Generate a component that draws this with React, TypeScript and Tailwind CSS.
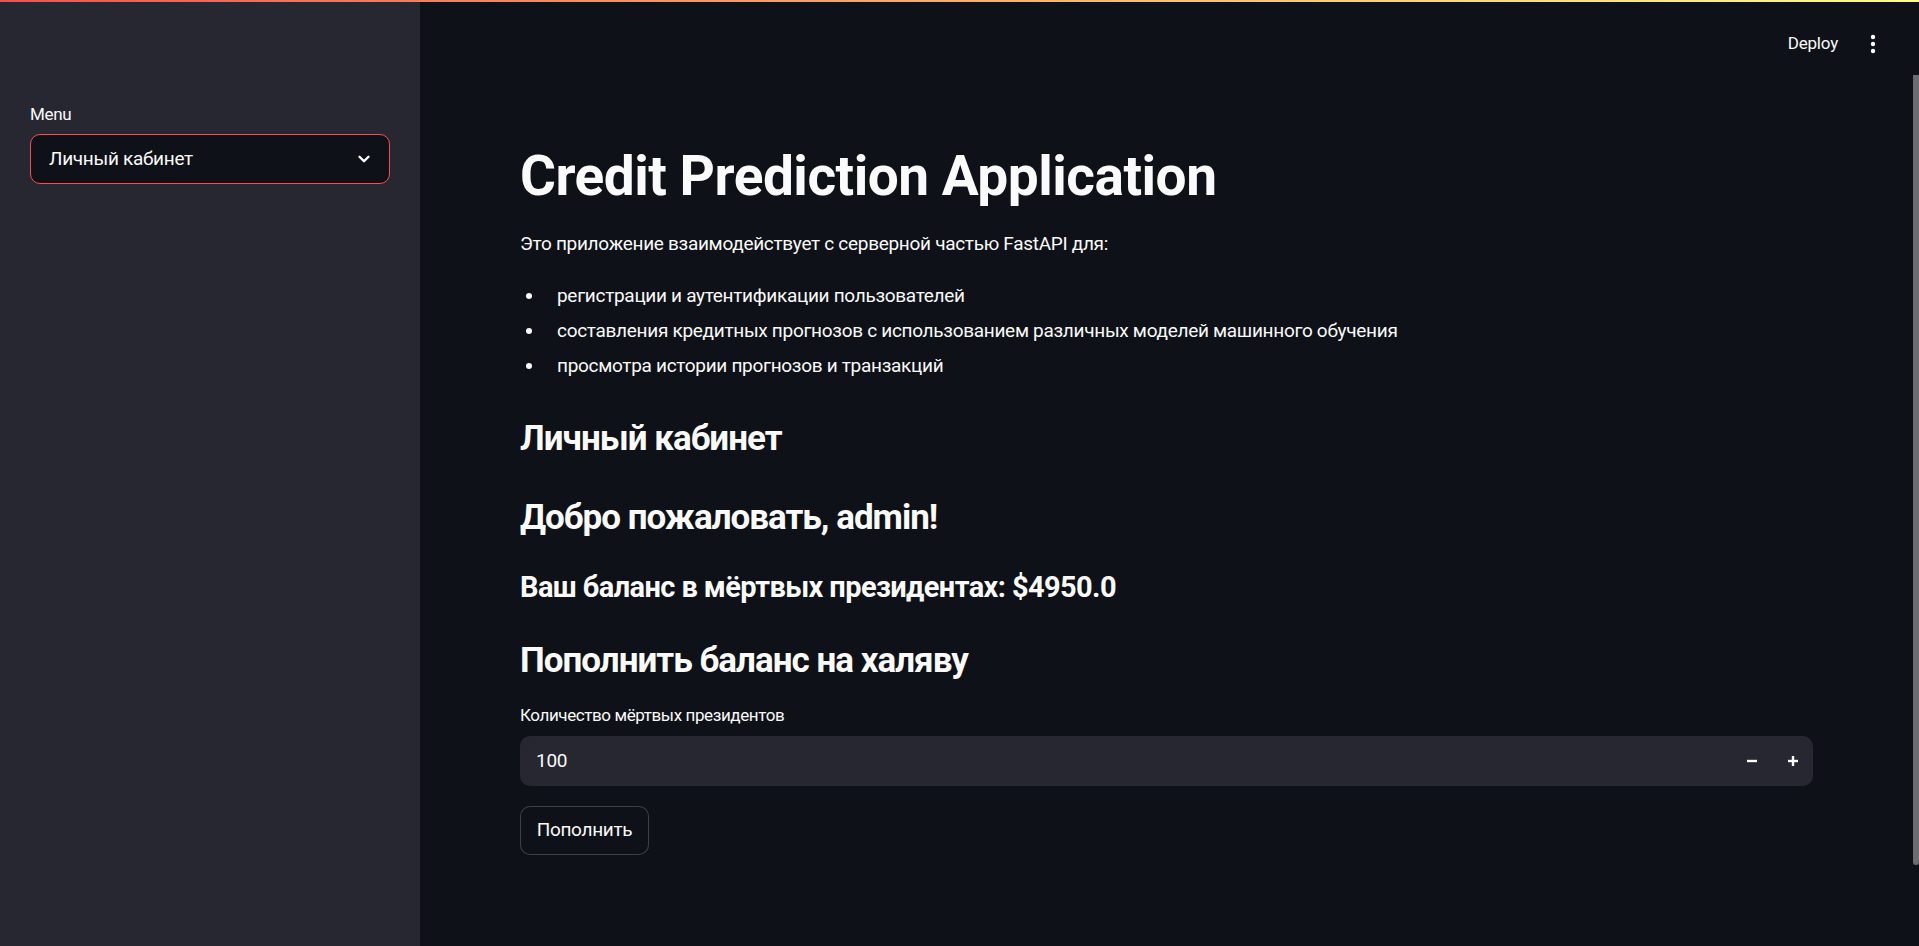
import React from 'react';

const Chevron = () => (
  <svg width="18" height="18" viewBox="0 0 24 24" fill="none" stroke="#fafafa" strokeWidth="3.2" strokeLinecap="round" strokeLinejoin="round">
    <polyline points="6 9 12 15 18 9" />
  </svg>
);

const Kebab = () => (
  <svg width="8" height="20" viewBox="0 0 8 20" fill="#fafafa">
    <circle cx="4" cy="3" r="2.2" />
    <circle cx="4" cy="10" r="2.2" />
    <circle cx="4" cy="17" r="2.2" />
  </svg>
);

const bullets = [
  'регистрации и аутентификации пользователей',
  'составления кредитных прогнозов с использованием различных моделей машинного обучения',
  'просмотра истории прогнозов и транзакций',
];

export default function App() {
  return (
    <div className="h-[946px] w-full flex flex-col overflow-hidden bg-[#0e1117] text-[#fafafa] [font-family:Roboto,'Noto_Sans',sans-serif]">
      {/* top decoration */}
      <div className="h-[2px] w-full bg-gradient-to-r from-[#ff4b4b] to-[#fffd80]" />

      <div className="flex flex-1 min-h-0">
        {/* Sidebar */}
        <aside className="w-[420px] shrink-0 bg-[#262730] pt-[101px] px-[30px]">
          <div className="text-[17px] leading-[22px] mb-[9px] tracking-[-0.3px]">Menu</div>
          <div className="h-[50px] flex items-center justify-between rounded-[10px] border border-[#ff4b4b] bg-[#0e1117] pl-[18px] pr-[16px]">
            <span className="text-[19px] tracking-[-0.3px]">Личный кабинет</span>
            <Chevron />
          </div>
        </aside>

        {/* Main */}
        <main className="relative flex-1 min-w-0 flex flex-col">
          <header className="h-[84px] flex items-center justify-end gap-[31px] pr-[42px]">
            <span className="text-[17px] tracking-[-0.2px]">Deploy</span>
            <Kebab />
          </header>

          <div className="pl-[100px] pr-[106px] flex flex-col">
            <h1 className="mt-[57px] text-[55px] leading-[66px] font-bold tracking-[-0.5px]">Credit Prediction Application</h1>
            <p className="mt-[19px] text-[19px] leading-[32px] tracking-[-0.3px]">Это приложение взаимодействует с серверной частью FastAPI для:</p>
            <ul className="mt-[20px] flex flex-col gap-[3px]">
              {bullets.map((b) => (
                <li key={b} className="flex items-center h-[32px] text-[19px] tracking-[-0.3px]">
                  <span className="w-[37px] flex pl-[6px]">
                    <span className="w-[6px] h-[6px] rounded-full bg-[#fafafa]" />
                  </span>
                  <span>{b}</span>
                </li>
              ))}
            </ul>
            <h3 className="mt-[35px] text-[35px] leading-[44px] font-bold tracking-[-1px]">Личный кабинет</h3>
            <h3 className="mt-[35px] text-[35px] leading-[44px] font-bold tracking-[-1px]">Добро пожаловать, admin!</h3>
            <h4 className="mt-[27px] text-[29px] leading-[40px] font-bold tracking-[-0.6px]">Ваш баланс в мёртвых президентах: $4950.0</h4>
            <h3 className="mt-[32px] text-[35px] leading-[44px] font-bold tracking-[-1px]">Пополнить баланс на халяву</h3>

            <label className="mt-[21px] text-[17px] leading-[22px] tracking-[-0.4px]">Количество мёртвых президентов</label>
            <div className="mt-[10px] h-[50px] flex items-center rounded-[10px] bg-[#262730]">
              <span className="flex-1 pl-[16px] text-[19px] tracking-[-0.3px]">100</span>
              <span className="w-[40px] h-full flex items-center justify-center">
                <svg width="12" height="12" viewBox="0 0 12 12" stroke="#fafafa" strokeWidth="2.4"><line x1="1" y1="6" x2="11" y2="6" /></svg>
              </span>
              <span className="w-[41px] h-full flex items-center justify-center">
                <svg width="12" height="12" viewBox="0 0 12 12" stroke="#fafafa" strokeWidth="2.4"><line x1="1" y1="6" x2="11" y2="6" /><line x1="6" y1="1" x2="6" y2="11" /></svg>
              </span>
            </div>

            <div className="mt-[20px]">
              <button className="h-[49px] w-[129px] rounded-[10px] border border-[#fafafa]/20 bg-[#0e1117] text-[19px] tracking-[-0.3px]">Пополнить</button>
            </div>
          </div>

          {/* scrollbar thumb */}
          <div className="absolute right-0 top-[73px] w-[6px] h-[790px] rounded-b-[3px] bg-[#6b6b70]" />
        </main>
      </div>
    </div>
  );
}
